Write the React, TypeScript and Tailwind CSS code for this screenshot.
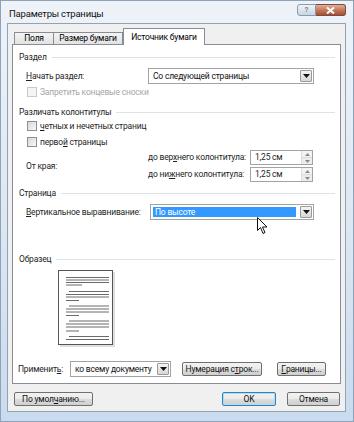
import React from "react";

const font = "font-['Roboto',sans-serif]";

function Arrow() {
  return (
    <svg width="7" height="4" viewBox="0 0 7 4">
      <path d="M0 0h7L3.5 4z" fill="#111" />
    </svg>
  );
}

function Group({ title, className = "" }: { title: string; className?: string }) {
  return (
    <div className={`flex items-center h-[12px] pl-[6px] pr-[5px] ${className}`}>
      <span className="text-[#1e1e1e]">{title}</span>
      <span className="ml-[5px] flex-1 h-px bg-[#dde3e8]" />
    </div>
  );
}

function Select({
  value,
  width,
  selected = false,
}: {
  value: string;
  width: string;
  selected?: boolean;
}) {
  return (
    <div className={`flex h-[16px] border border-[#a3a3a3] bg-white p-px ${width}`}>
      {selected ? (
        <div className="flex-1 flex items-center border border-white bg-[#3399ff] text-white pl-[2px] mr-[3px]">
          {value}
        </div>
      ) : (
        <div className="flex-1 flex items-center pl-[3px] text-[#111]">{value}</div>
      )}
      <div className="w-[12px] flex items-center justify-center border border-[#9a9a9a] rounded-[1px] bg-gradient-to-b from-[#f4f4f4] to-[#d6d6d6]">
        <Arrow />
      </div>
    </div>
  );
}

function Spin({ value }: { value: string }) {
  return (
    <div className="flex w-[63px] h-[15px] border border-[#a3a3a3] bg-white">
      <div className="flex-1 flex items-center pl-[4px]">{value}</div>
      <div className="w-[11px] flex flex-col border-l border-[#dcdcdc]">
        <div className="flex-1 flex items-center justify-center bg-[#f3f3f3] border-b border-[#dcdcdc]">
          <svg width="5" height="3" viewBox="0 0 5 3">
            <path d="M0 3h5L2.5 0z" fill="#8a8a8a" />
          </svg>
        </div>
        <div className="flex-1 flex items-center justify-center bg-[#ececec]">
          <svg width="5" height="3" viewBox="0 0 5 3">
            <path d="M0 0h5L2.5 3z" fill="#8a8a8a" />
          </svg>
        </div>
      </div>
    </div>
  );
}

function Check({ label, disabled = false }: { label: React.ReactNode; disabled?: boolean }) {
  return (
    <div className="flex items-center h-[12px] pl-[14px]">
      <span
        className={
          disabled
            ? "w-[10px] h-[10px] border border-[#c8c8c8] bg-[#f4f4f4]"
            : "w-[10px] h-[10px] border border-[#8e8f8f] bg-gradient-to-br from-[#d8d8d8] to-[#f8f8f8]"
        }
      />
      <span className={disabled ? "ml-[3px] text-[#a6a6a6]" : "ml-[3px] text-[#1e1e1e]"}>{label}</span>
    </div>
  );
}

function Button({ children, w, focused = false }: { children: React.ReactNode; w: string; focused?: boolean }) {
  return (
    <div
      className={`flex items-center justify-center h-[14px] rounded-[2px] border ${w} ${
        focused ? "border-[#3c7fb1] shadow-[inset_0_0_0_1px_#9fe0fb]" : "border-[#707070]"
      } bg-[linear-gradient(#f2f2f2_0%,#ebebeb_50%,#dddddd_51%,#cfcfcf_100%)] text-[#111]`}
    >
      {children}
    </div>
  );
}

function PagePreview() {
  const full = (y: number, x1 = 8) => <line key={y} x1={x1} y1={y} x2={51} y2={y} />;
  const short = (y: number, x2 = 21) => <line key={y} x1={8} y1={y} x2={x2} y2={y} />;
  return (
    <svg width="58" height="78" viewBox="0 0 58 78">
      <rect x="2" y="2" width="55" height="75" fill="#c8c8c8" opacity="0.6" />
      <rect x="0.5" y="0.5" width="54" height="74" fill="#fff" stroke="#555" />
      <g stroke="#6a6a6a" strokeWidth="1">
        {full(7.5)}
        {full(10)}
        {full(12.5)}
        {short(15, 24)}
        {full(21.5, 11)}
        {full(24.5)}
        {full(27)}
        {short(30.5)}
        {full(36, 11)}
        {full(39)}
        {full(42)}
        {short(45.5)}
        {full(51, 11)}
        {full(54)}
        {full(57)}
        {short(61)}
        {full(66.5, 11)}
        {full(69.5)}
      </g>
    </svg>
  );
}

export default function App() {
  return (
    <div
      className={`relative w-[354px] h-[422px] overflow-hidden flex flex-col bg-gradient-to-b from-[#eef3f9] via-[#dde8f3] to-[#c9dbee] border border-[#8ea3b9] text-[8.5px] tracking-[-0.2px] leading-none whitespace-nowrap ${font}`}
    >
      {/* title bar */}
      <div className="h-[22px] flex items-start">
        <span className="pl-[8px] pt-[8px] text-[9.5px] text-[#111]">Параметры страницы</span>
        <div className="ml-auto mr-[7px] mt-[3px] flex">
          <div className="w-[19px] h-[12px] rounded-l-[3px] border border-[#8b9aab] bg-gradient-to-b from-[#f0f4f8] to-[#c9d5e2] flex items-center justify-center text-[8px] font-bold text-[#7c8896]">
            ?
          </div>
          <div className="w-[30px] h-[12px] rounded-r-[3px] border border-l-0 border-[#7a4c3c] bg-gradient-to-b from-[#e0b09a] via-[#c47a5d] to-[#a64e33] flex items-center justify-center">
            <svg width="9" height="7" viewBox="0 0 9 7">
              <path d="M1 0.5l7 6M8 0.5l-7 6" stroke="#fff" strokeWidth="2" />
            </svg>
          </div>
        </div>
      </div>

      {/* client */}
      <div className="flex-1 ml-[6px] mr-[7px] mb-[9px] border border-[#93a3b5] bg-[#f0f0f0] px-[4px] pt-[4px] flex flex-col">
        {/* tabs */}
        <div className="flex items-end h-[16px] pl-[2px]">
          <div className="w-[40px] h-[12px] border border-b-0 border-[#898c95] bg-gradient-to-b from-[#f4f4f4] to-[#e2e2e2] flex items-center justify-center">
            Поля
          </div>
          <div className="w-[69px] h-[12px] border border-b-0 border-l-0 border-[#898c95] bg-gradient-to-b from-[#f4f4f4] to-[#e2e2e2] flex items-center justify-center">
            Размер бумаги
          </div>
          <div className="relative z-10 w-[82px] h-[17px] -mb-px border border-b-0 border-[#898c95] bg-white flex items-center justify-center">
            Источник бумаги
          </div>
        </div>

        {/* panel */}
        <div className="h-[340px] border border-[#898c95] bg-white flex flex-col text-[#1e1e1e]">
          <Group title="Раздел" className="mt-[6px]" />

          <div className="mt-[5px] flex items-center h-[16px] pl-[13px]">
            <span className="w-[122px]">
              <u className="underline-offset-1">Н</u>ачать раздел:
            </span>
            <Select value="Со следующей страницы" width="w-[166px]" />
          </div>

          <div className="mt-[2px]">
            <Check label="Запретить концевые сноски" disabled />
          </div>

          <Group title="Различать колонтитулы" className="mt-[8px]" />

          <div className="mt-[2px]">
            <Check
              label={
                <>
                  <u className="underline-offset-1">ч</u>етных и нечетных страниц
                </>
              }
            />
          </div>
          <div className="mt-[4px]">
            <Check
              label={
                <>
                  перво<u className="underline-offset-1">й</u> страницы
                </>
              }
            />
          </div>

          <div className="mt-[2px] flex items-center h-[32px] pl-[13px]">
            <span className="w-[122px]">От края:</span>
            <div className="flex flex-col gap-[2px]">
              <div className="flex items-center">
                <span className="w-[102px]">
                  до вер<u className="underline-offset-1">х</u>него колонтитула:
                </span>
                <Spin value="1,25 см" />
              </div>
              <div className="flex items-center">
                <span className="w-[102px]">
                  до ни<u className="underline-offset-1">ж</u>него колонтитула:
                </span>
                <Spin value="1,25 см" />
              </div>
            </div>
          </div>

          <Group title="Страница" className="mt-[5px]" />

          <div className="mt-[5px] flex items-center h-[16px] pl-[13px]">
            <span className="w-[124px]">
              <u className="underline-offset-1">В</u>ертикальное выравнивание:
            </span>
            <Select value="По высоте" width="w-[164px]" selected />
          </div>

          <Group title="Образец" className="mt-[33px]" />

          <div className="mt-[5px] pl-[45px]">
            <PagePreview />
          </div>

          <div className="mt-[14px] flex items-center h-[14px] pl-[5px]">
            <span className="w-[52px]">
              Применит<u className="underline-offset-1">ь</u>:
            </span>
            <Select value="ко всему документу" width="w-[101px] h-[14px]" />
            <div className="ml-[11px]">
              <Button w="w-[80px]">
                Нумерация с<u className="underline-offset-1">т</u>рок...
              </Button>
            </div>
            <div className="ml-[15px]">
              <Button w="w-[49px]">
                <u className="underline-offset-1">Г</u>раницы...
              </Button>
            </div>
          </div>
        </div>

        {/* bottom buttons */}
        <div className="mt-[8px] flex items-center pl-[2px]">
          <Button w="w-[79px]">
            По умол<u className="underline-offset-1">ч</u>анию...
          </Button>
          <div className="ml-auto flex gap-[11px] pr-[1px]">
            <Button w="w-[54px]" focused>
              OK
            </Button>
            <Button w="w-[53px]">Отмена</Button>
          </div>
        </div>
      </div>

      {/* mouse pointer */}
      <svg className="absolute left-[256px] top-[216px]" width="12" height="18" viewBox="0 0 12 18">
        <path
          d="M0.5 0.5v13l3-3 2.5 6 2-1-2.5-5.5h4.5z"
          fill="#fff"
          stroke="#111"
          strokeWidth="1"
          strokeLinejoin="round"
        />
      </svg>
    </div>
  );
}
